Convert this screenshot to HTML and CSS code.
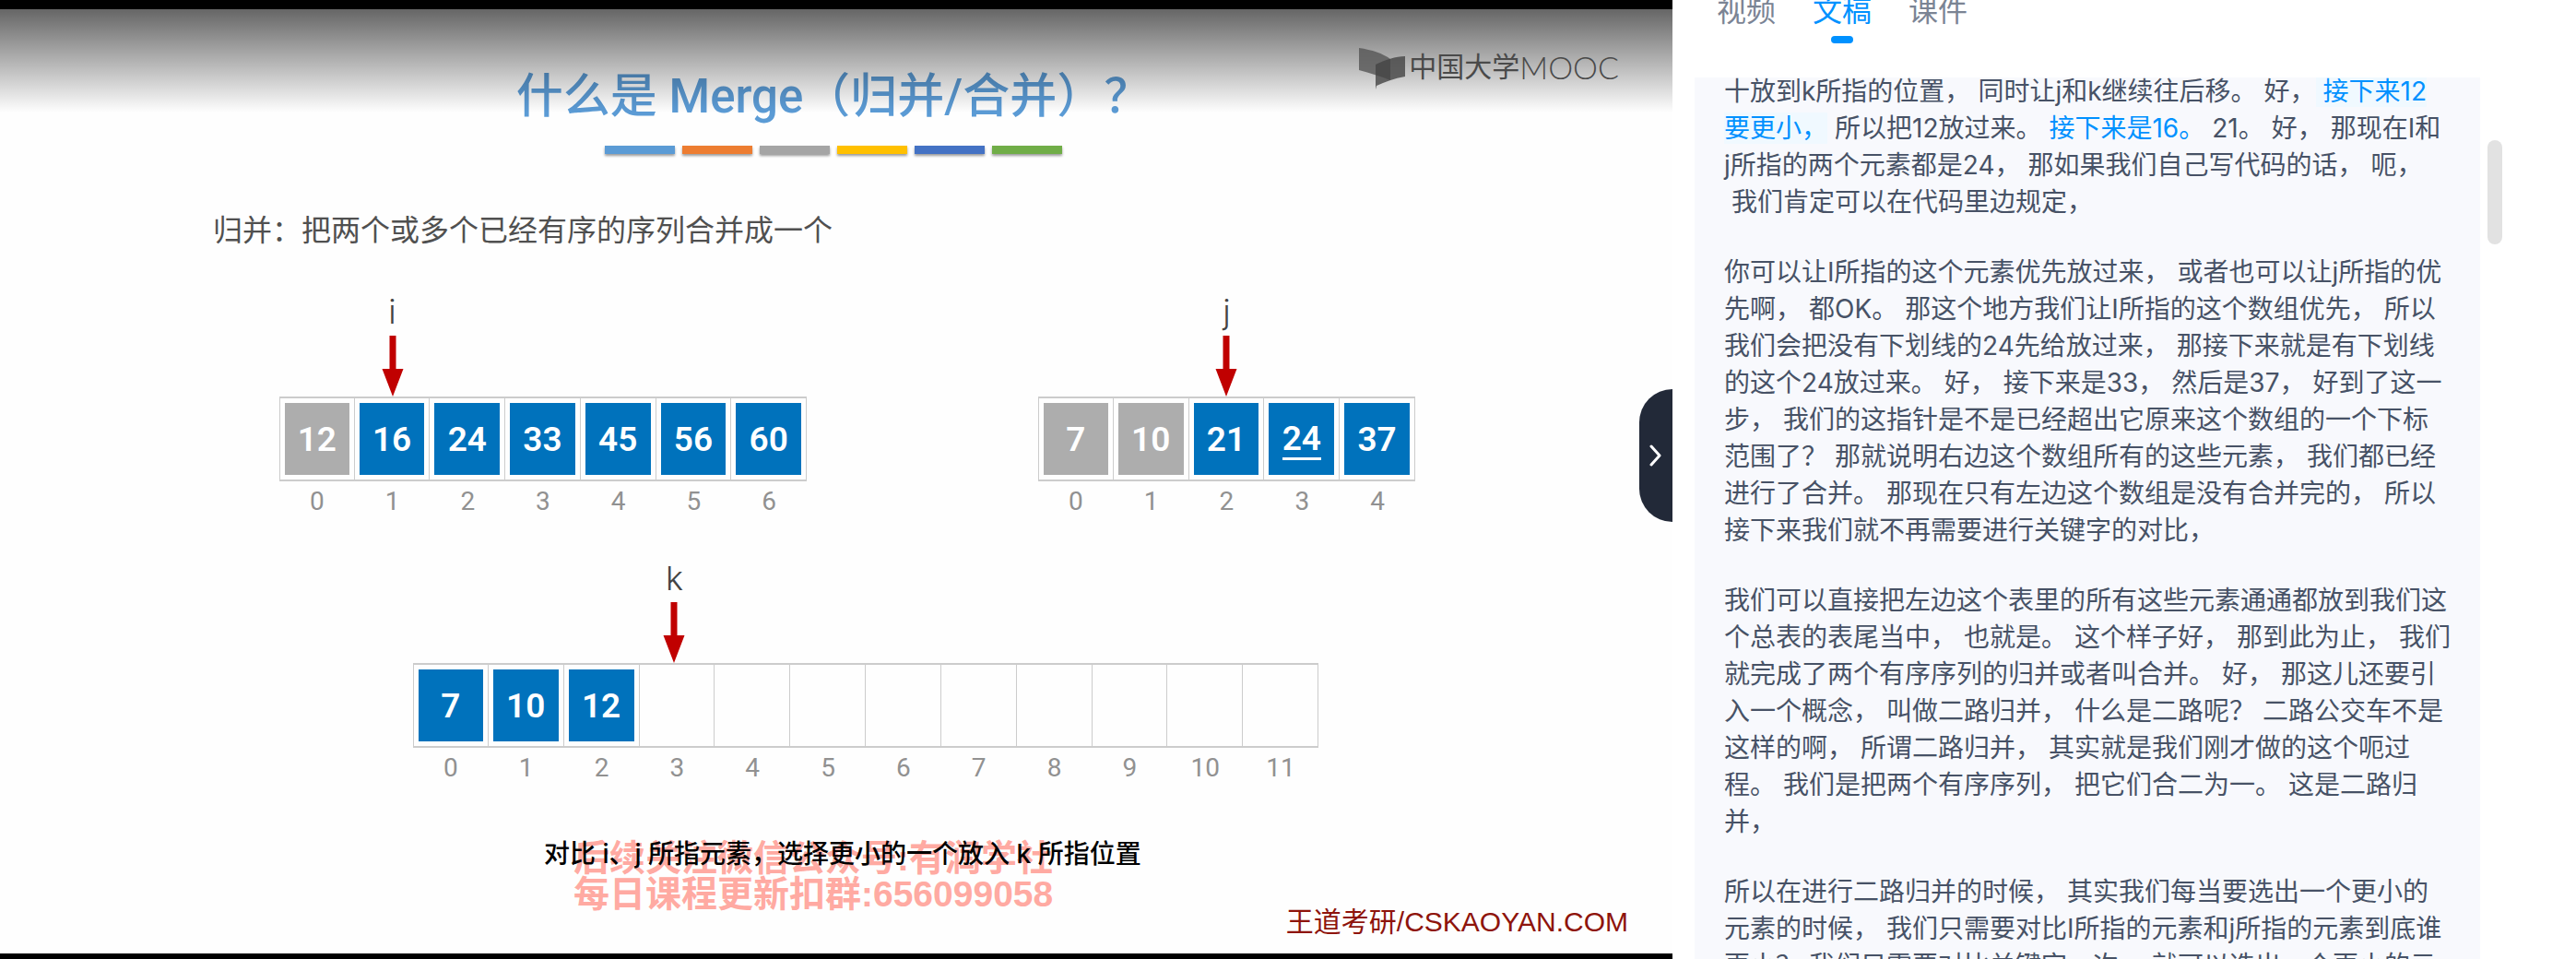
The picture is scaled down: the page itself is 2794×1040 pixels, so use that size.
FILE: index.html
```html
<!DOCTYPE html>
<html lang="zh-CN">
<head>
<meta charset="utf-8">
<meta name="viewport" content="width=device-width, initial-scale=1">
<title>什么是 Merge（归并/合并）？</title>
<link rel="stylesheet" href="styles.css">
</head>
<body>
<div class="page">
  <main class="player">
    <section class="slide">
      <h1 class="title">什么是 Merge（归并/合并）？</h1>
      <div class="stripes">
        <span class="stripe sky"></span><span class="stripe orange"></span><span class="stripe gray"></span><span class="stripe yellow"></span><span class="stripe blue"></span><span class="stripe green"></span>
      </div>
      <p class="definition">归并：把两个或多个已经有序的序列合并成一个</p>

      <div class="row sources">
        <div class="array seven">
          <div class="pointer at-1"><span>i</span><svg class="arrow" viewBox="0 0 24 66"><path d="M8.5 0h7v36h8L12 66 .5 36h8z"/></svg></div>
          <div class="cell"><b class="tile used">12</b></div><div class="cell"><b class="tile">16</b></div><div class="cell"><b class="tile">24</b></div><div class="cell"><b class="tile">33</b></div><div class="cell"><b class="tile">45</b></div><div class="cell"><b class="tile">56</b></div><div class="cell"><b class="tile">60</b></div>
          <span class="index">0</span><span class="index">1</span><span class="index">2</span><span class="index">3</span><span class="index">4</span><span class="index">5</span><span class="index">6</span>
        </div>
        <div class="array five">
          <div class="pointer at-2"><span>j</span><svg class="arrow" viewBox="0 0 24 66"><path d="M8.5 0h7v36h8L12 66 .5 36h8z"/></svg></div>
          <div class="cell"><b class="tile used">7</b></div><div class="cell"><b class="tile used">10</b></div><div class="cell"><b class="tile">21</b></div><div class="cell"><b class="tile"><span class="marked">24</span></b></div><div class="cell"><b class="tile">37</b></div>
          <span class="index">0</span><span class="index">1</span><span class="index">2</span><span class="index">3</span><span class="index">4</span>
        </div>
      </div>

      <div class="row target">
        <div class="array twelve">
          <div class="pointer at-3"><span>k</span><svg class="arrow" viewBox="0 0 24 66"><path d="M8.5 0h7v36h8L12 66 .5 36h8z"/></svg></div>
          <div class="cell"><b class="tile">7</b></div><div class="cell"><b class="tile">10</b></div><div class="cell"><b class="tile">12</b></div><div class="cell"></div><div class="cell"></div><div class="cell"></div><div class="cell"></div><div class="cell"></div><div class="cell"></div><div class="cell"></div><div class="cell"></div><div class="cell"></div>
          <span class="index">0</span><span class="index">1</span><span class="index">2</span><span class="index">3</span><span class="index">4</span><span class="index">5</span><span class="index">6</span><span class="index">7</span><span class="index">8</span><span class="index">9</span><span class="index">10</span><span class="index">11</span>
        </div>
      </div>

      <div class="caption-area">
        <p class="watermark">后续关注微信公众号:有润学社<br>每日课程更新扣群:656099058</p>
        <p class="caption">对比 i、j 所指元素，选择更小的一个放入 k 所指位置</p>
      </div>
      <p class="credit">王道考研/CSKAOYAN.COM</p>

      <div class="shade"></div>
      <div class="logo">
        <svg class="book" viewBox="0 0 50 45"><path d="M0 0C14 2 26 6 34 12L34 35C24 31 12 27 0 24z" fill="#555" fill-opacity=".8"/><path d="M18 18C28 13 40 9 50 9L50 31C38 33 28 37 19 41L18 45z" fill="#444" fill-opacity=".8"/></svg>
        <span class="logo-name">中国大学</span><span class="logo-latin">MOOC</span>
      </div>
    </section>
    <button class="collapse" type="button" aria-label="收起侧栏"><svg viewBox="0 0 14 24"><path d="M2 2l9 10-9 10"/></svg></button>
  </main>

  <aside class="side">
    <nav class="tabs" role="tablist">
      <button class="tab" type="button" role="tab">视频</button>
      <button class="tab active" type="button" role="tab" aria-selected="true">文稿</button>
      <button class="tab" type="button" role="tab">课件</button>
    </nav>
    <div class="script-area">
      <article class="transcript">
        <p><span>十放到k所指的位置，</span><span>同时让j和k继续往后移。</span><span>好，</span><span class="hit current">接下来12要更小，</span><span>所以把12放过来。</span><span class="hit">接下来是16。</span><span>21。</span><span>好，</span><span>那现在I和<br>j所指的两个元素都是24，</span><span>那如果我们自己写代码的话，</span><span>呃，</span><br><span class="indent">我们肯定可以在代码里边规定，</span></p>
        <p><span>你可以让I所指的这个元素优先放过来，</span><span>或者也可以让j所指的优先啊，</span><span>都OK。</span><span>那这个地方我们让I所指的这个数组优先，</span><span>所以我们会把没有下划线的24先给放过来，</span><span>那接下来就是有下划线的这个24放过来。</span><span>好，</span><span>接下来是33，</span><span>然后是37，</span><span>好到了这一步，</span><span>我们的这指针是不是已经超出它原来这个数组的一个下标范围了？</span><span>那就说明右边这个数组所有的这些元素，</span><span>我们都已经进行了合并。</span><span>那现在只有左边这个数组是没有合并完的，</span><span>所以接下来我们就不再需要进行关键字的对比，</span></p>
        <p><span>我们可以直接把左边这个表里的所有这些元素通通都放到我们这个总表的表尾当中，</span><span>也就是。</span><span>这个样子好，</span><span>那到此为止，</span><span>我们就完成了两个有序序列的归并或者叫合并。</span><span>好，</span><span>那这儿还要引入一个概念，</span><span>叫做二路归并，</span><span>什么是二路呢？</span><span>二路公交车不是这样的啊，</span><span>所谓二路归并，</span><span>其实就是我们刚才做的这个呃过程。</span><span>我们是把两个有序序列，</span><span>把它们合二为一。</span><span>这是二路归并，</span></p>
        <p><span>所以在进行二路归并的时候，</span><span>其实我们每当要选出一个更小的元素的时候，</span><span>我们只需要对比I所指的元素和j所指的元素到底谁更小？</span><span>我们只需要对比关键字一次，</span><span>就可以选出一个更小的元素，</span></p>
      </article>
      <div class="scroll-thumb"></div>
    </div>
  </aside>
</div>
</body>
</html>
```
FILE: styles.css
```css
* { box-sizing: border-box; }
body, h1, p { margin: 0; }
body {
  background: #fff;
  font-family: Inter, "Noto Sans CJK SC", sans-serif;
}
button { border: 0; padding: 0; background: none; font: inherit; }
.page { display: flex; height: 100vh; overflow: hidden; }

/* Video area */
.player {
  position: relative;
  flex: 1;
  min-width: 0;
  display: flex;
  padding: 10px 0 6px;
  background: #000;
}
.slide {
  position: relative;
  flex: 1;
  min-width: 0;
  display: flex;
  flex-direction: column;
  background: #fefefe;
  font-family: Roboto, "Noto Sans CJK SC", sans-serif;
}
.title {
  margin-top: 65px;
  padding-right: 6px;
  color: #5b9bd5;
  font-size: 51px;
  font-weight: 500;
  line-height: 60px;
  text-align: center;
}
.stripes {
  display: flex;
  justify-content: center;
  gap: 8px;
  margin-top: 23px;
  padding-right: 6px;
}
.stripe { width: 76px; height: 9px; box-shadow: 0 2px 3px rgba(0, 0, 0, .4); }
.sky { background: #5b9bd5; }
.orange { background: #ed7d31; }
.gray { background: #a5a5a5; }
.yellow { background: #ffc000; }
.blue { background: #4472c4; }
.green { background: #70ad47; }
.definition {
  margin-top: 63px;
  padding-left: 231px;
  color: #505050;
  font-size: 32px;
  line-height: 40px;
}
.row { display: grid; }
.sources { grid-template-columns: 303fr 572fr 251fr 409fr 279fr; margin-top: 48px; }
.target { grid-template-columns: 448fr 982fr 384fr; margin-top: 49px; }
.array { display: grid; grid-template-rows: 112px 92px 36px; }
.seven { grid-column: 2; grid-template-columns: repeat(7, 1fr); }
.five { grid-column: 4; grid-template-columns: repeat(5, 1fr); }
.twelve { grid-column: 2; grid-template-columns: repeat(12, 1fr); }
.pointer {
  grid-row: 1;
  display: flex;
  flex-direction: column;
  align-items: center;
  gap: 6px;
  color: #444;
  font-family: Inter, sans-serif;
  font-size: 36px;
  font-weight: 300;
  line-height: 40px;
}
.at-1 { grid-column: 2; }
.at-2 { grid-column: 3; }
.at-3 { grid-column: 4; padding-right: 6px; }
.arrow { width: 24px; height: 66px; fill: #c00000; }
.cell {
  grid-row: 2;
  display: flex;
  padding: 5px 5px;
  border: solid #ccc;
  border-width: 2px 1px 2px 0;
}
.pointer + .cell { border-left-width: 1px; }
.tile {
  flex: 1;
  display: flex;
  align-items: center;
  justify-content: center;
  padding-top: 2px;
  background: #0072bc;
  color: #fff;
  font-size: 37px;
  font-weight: 600;
  line-height: 40px;
}
.used { background: #adadad; }
.marked { border-bottom: 3px solid #fff; }
.index {
  grid-row: 3;
  color: #919191;
  font-size: 28px;
  line-height: 30px;
  padding-top: 7px;
  text-align: center;
}
.caption-area { position: relative; margin-top: 59px; }
.caption {
  position: relative;
  padding-left: 590px;
  color: #000;
  font-family: Inter, "Noto Sans CJK SC", sans-serif;
  font-size: 28px;
  font-weight: 500;
  line-height: 40px;
}
.watermark {
  position: absolute;
  top: 5px;
  left: 622px;
  color: #ffaaa2;
  font-family: "Liberation Sans", "Noto Sans CJK SC", sans-serif;
  font-size: 39px;
  font-weight: 700;
  line-height: 39px;
}
.credit {
  margin-top: 34px;
  padding-right: 48px;
  color: #8e140c;
  font-family: "Liberation Sans", "Noto Sans CJK SC", sans-serif;
  font-size: 30px;
  line-height: 40px;
  text-align: right;
}
.shade {
  position: absolute;
  inset: 0 0 auto;
  height: 112px;
  background: linear-gradient(rgba(0, 0, 0, .6), rgba(0, 0, 0, 0));
}
.logo {
  position: absolute;
  top: 42px;
  right: 58px;
  display: flex;
  align-items: flex-start;
  color: #4a4a4a;
}
.book { width: 50px; height: 45px; margin-right: 4px; }
.logo-name { font-size: 30px; line-height: 42px; }
.logo-latin { font-family: Lato, sans-serif; font-size: 34px; font-weight: 300; line-height: 42px; }
.collapse {
  position: absolute;
  top: 422px;
  right: 0;
  display: flex;
  align-items: center;
  justify-content: center;
  width: 36px;
  height: 144px;
  border-radius: 36px 0 0 36px;
  background: #222938;
}
.collapse svg { width: 14px; height: 24px; fill: none; stroke: #fff; stroke-width: 3; stroke-linecap: round; stroke-linejoin: round; }

/* Side panel */
.side { flex: none; width: 980px; display: flex; flex-direction: column; padding-left: 24px; }
.tabs { display: flex; flex: none; gap: 40px; height: 92px; margin-top: -8px; padding-left: 24px; }
.tab {
  position: relative;
  align-self: flex-start;
  color: #7b8494;
  font-size: 32px;
  line-height: 40px;
}
.active { color: #0091ff; }
.active::after {
  content: "";
  position: absolute;
  left: 20px;
  bottom: -15px;
  width: 24px;
  height: 8px;
  border-radius: 4px;
  background: #0091ff;
}
.script-area { flex: 1; min-height: 0; display: flex; gap: 8px; padding-right: 80px; }
.transcript {
  flex: 1;
  padding: 0 31px 0 32px;
  overflow: hidden;
  background: #f8f9fd;
  color: #475266;
  font-size: 28px;
  line-height: 40px;
  text-spacing-trim: space-all;
}
.transcript p { margin-bottom: 36px; }
.transcript p:first-child { margin-top: -5px; }
.transcript span + span, .transcript .indent { padding-left: 8px; }
.transcript .hit { color: #0091ff; }
.transcript .current { background: #f0f9ff; }
.scroll-thumb { width: 16px; height: 113px; margin-top: 68px; border-radius: 8px; background: #e2e2e2; }
```
